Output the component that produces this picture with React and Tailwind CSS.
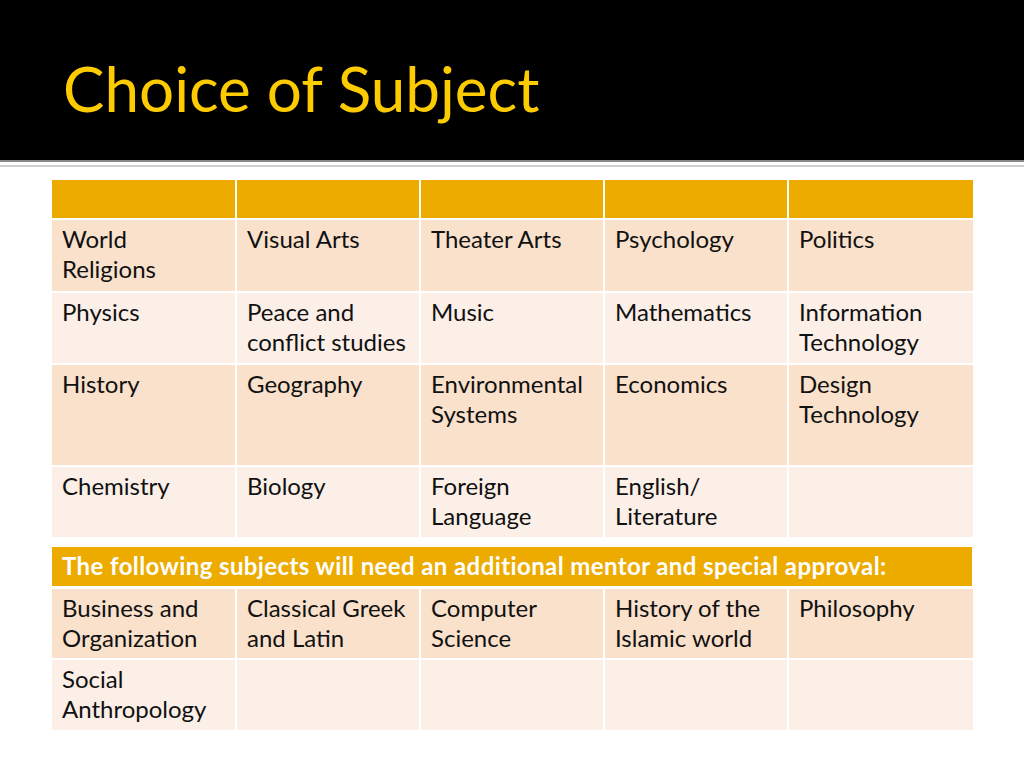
import React from "react";

const odd = "bg-[#f9e1cc]";
const even = "bg-[#fbefe7]";

const rows1 = [
  { h: "h-[71px]", bg: odd, cells: ["World\nReligions", "Visual Arts", "Theater Arts", "Psychology", "Politics"] },
  { h: "h-[70px]", bg: even, cells: ["Physics", "Peace and\nconflict studies", "Music", "Mathematics", "Information\nTechnology"] },
  { h: "h-[100px]", bg: odd, cells: ["History", "Geography", "Environmental\nSystems", "Economics", "Design\nTechnology"] },
  { h: "h-[70px]", bg: even, cells: ["Chemistry", "Biology", "Foreign\nLanguage", "English/\nLiterature", ""] },
];

const rows2 = [
  { h: "h-[69px]", bg: odd, cells: ["Business and\nOrganization", "Classical Greek\nand Latin", "Computer\nScience", "History of the\nIslamic world", "Philosophy"] },
  { h: "h-[70px]", bg: even, cells: ["Social\nAnthropology", "", "", "", ""] },
];

const Cell = ({ text, bg, h }) => (
  <div className={`${bg} ${h} whitespace-pre-line pl-[10px] pr-1 pt-[4px] text-[24px] leading-[30px] text-[#111]`}>
    {text}
  </div>
);

export default function App() {
  return (
    <div className="w-[1024px] h-[768px] bg-white flex flex-col" style={{ fontFamily: "Lato, 'Open Sans', sans-serif" }}>
      <div className="h-[160px] bg-black flex items-start pl-[63px] pt-[52px]">
        <h1 className="text-[62px] leading-[72px] text-[#fccb00]">Choice of Subject</h1>
      </div>
      <div className="h-[2px] bg-[#8a8a8a]" />
      <div className="h-[3px] bg-white" />
      <div className="h-[2px] bg-[#cfcfcf]" />
      <div className="pl-[52px] pt-[13px] w-[972px]">
        <div className="grid grid-cols-[183px_182px_182px_182px_184px] gap-[2px]">
          {[0, 1, 2, 3, 4].map((i) => (
            <div key={i} className="h-[38px] bg-[#edab00]" />
          ))}
          {rows1.map((r, ri) =>
            r.cells.map((c, ci) => <Cell key={`${ri}-${ci}`} text={c} bg={r.bg} h={r.h} />)
          )}
        </div>
        <div className="mt-[10px] h-[39px] bg-[#edab00] pl-[10px] pt-[4px] text-[24px] leading-[30px] font-bold tracking-[0.4px] text-white">
          The following subjects will need an additional mentor and special approval:
        </div>
        <div className="mt-[3px] grid grid-cols-[183px_182px_182px_182px_184px] gap-[2px]">
          {rows2.map((r, ri) =>
            r.cells.map((c, ci) => <Cell key={`${ri}-${ci}`} text={c} bg={r.bg} h={r.h} />)
          )}
        </div>
      </div>
    </div>
  );
}
